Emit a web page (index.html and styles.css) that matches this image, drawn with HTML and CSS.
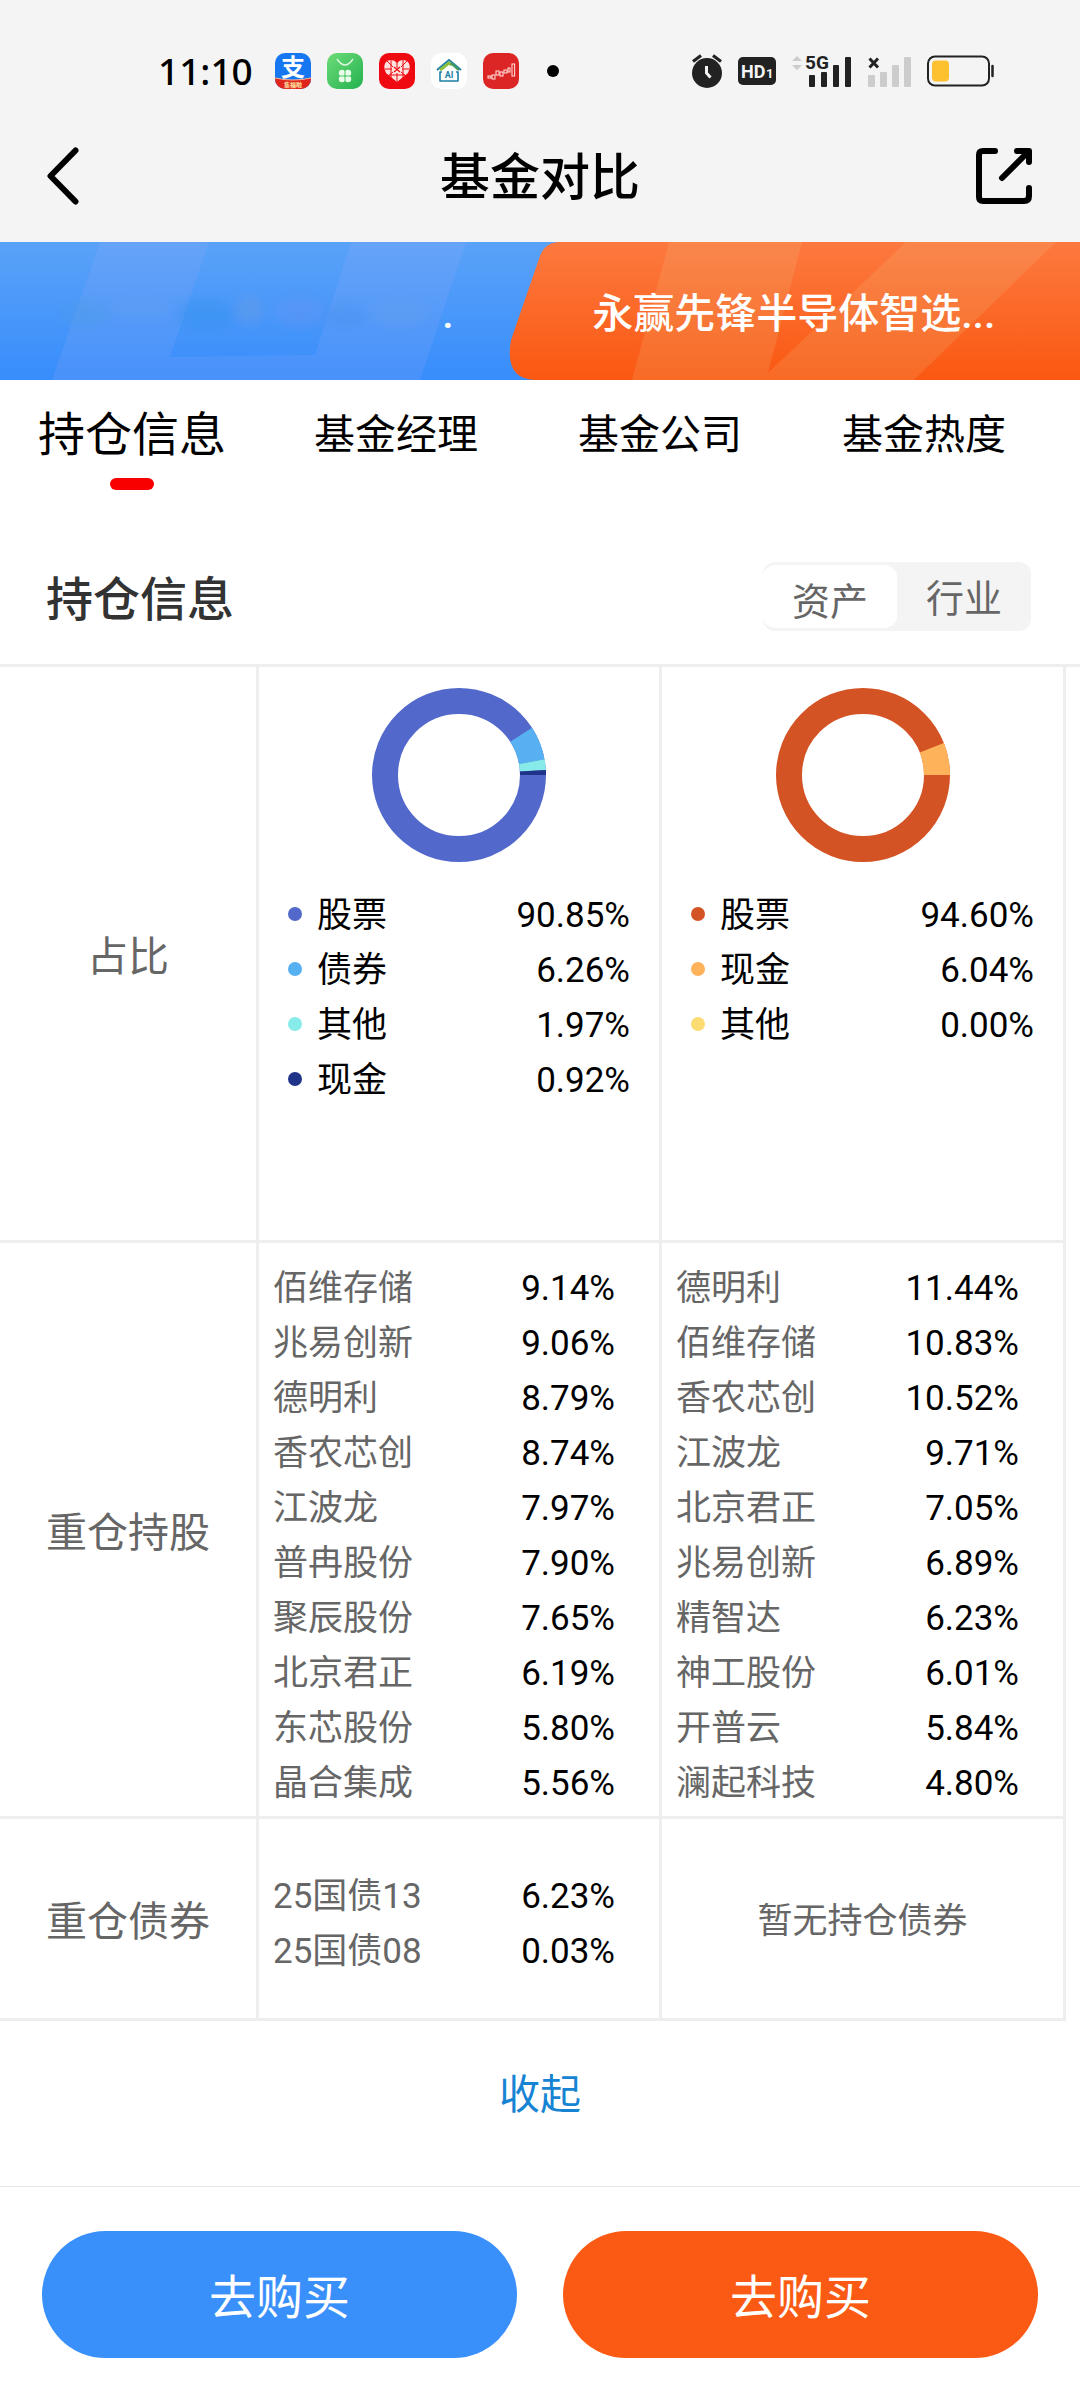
FILE: index.html
```html
<!DOCTYPE html>
<html lang="zh-CN">
<head>
  <meta charset="UTF-8">
  <meta name="viewport" content="width=device-width">
  <title>基金对比</title>
  <link rel="stylesheet" href="styles.css">
</head>
<body>
<div class="statusbar">
  <span class="time">11:10</span>
  <div class="apps">
    <svg width="36" height="36" viewBox="0 0 36 36">
      <defs><clipPath id="round"><rect width="36" height="36" rx="10"/></clipPath></defs>
      <g clip-path="url(#round)">
        <rect width="36" height="36" fill="#1677f0"/>
        <path d="M0 25 Q18 29 36 25 V36 H0z" fill="#e0261c"/>
        <path d="M0 25 Q18 29 36 25" fill="none" stroke="#f7b79a" stroke-width="1"/>
      </g>
      <text x="18" y="23" class="app-text" font-size="24" fill="#fff">支</text>
      <text x="18" y="34" class="app-text" font-size="6" fill="#ffe9a8">集福啦</text>
    </svg>
    <svg width="36" height="36" viewBox="0 0 36 36">
      <defs><linearGradient id="green" x2="1" y2="1"><stop stop-color="#6edc78"/><stop offset="1" stop-color="#22b14f"/></linearGradient></defs>
      <rect width="36" height="36" rx="10" fill="url(#green)"/>
      <path d="M10 6 Q18 18 26 6" fill="none" stroke="#d9f7dc" stroke-width="1.4"/>
      <g fill="#e9fbe9"><circle cx="15" cy="20" r="3.2"/><circle cx="21" cy="20" r="3.2"/><circle cx="15" cy="26" r="3.2"/><circle cx="21" cy="26" r="3.2"/></g>
      <path d="M18 17v12M12 23h12" stroke="#55cd6c" stroke-width="1"/>
    </svg>
    <svg width="36" height="36" viewBox="0 0 36 36">
      <rect width="36" height="36" rx="10" fill="#ee0a10"/>
      <path d="M18 29 L7 20 Q3 12 8 8 Q14 5 18 10 Q22 5 28 8 Q33 12 29 20z" fill="#ffe2de"/>
      <path d="M18 9v6M18 20v9M8 8l6 6M28 8l-6 6M14 19l-6 5M22 19l6 5M6 16h7M23 16h7M10 22h16M12 6v19M24 6v19" stroke="#ee0a10" stroke-width="1" fill="none"/>
      <path d="M15 14l6 5M21 14l-6 5" stroke="#ee0a10" stroke-width="1.2"/>
    </svg>
    <svg width="36" height="36" viewBox="0 0 36 36">
      <rect width="36" height="36" rx="10" fill="#fff"/>
      <path d="M6 17 L18 7 L30 17" fill="none" stroke="#1d7fa8" stroke-width="2"/>
      <path d="M9 17 L18 10 L21 12" fill="none" stroke="#8cbf3f" stroke-width="3"/>
      <path d="M20 10 L28 17" stroke="#3f9a62" stroke-width="2.4"/>
      <path d="M11 19H9V28H27V19H25" fill="none" stroke="#1d7fa8" stroke-width="1.6" stroke-linejoin="round"/>
      <text x="18" y="25" class="app-text" font-size="9" fill="#1d7fa8">AI</text>
    </svg>
    <svg width="36" height="36" viewBox="0 0 36 36">
      <rect width="36" height="36" rx="10" fill="#dc2626"/>
      <g fill="none" stroke="#ffd8d4" stroke-width="1.1">
        <rect x="5" y="23" width="3" height="2"/><rect x="9" y="22" width="3" height="4"/><rect x="13" y="18" width="3" height="4"/>
        <rect x="17" y="19" width="3" height="4"/><rect x="21" y="17" width="3" height="3"/><rect x="25" y="15" width="2" height="4"/><rect x="29" y="11" width="2.6" height="12"/>
      </g>
    </svg>
  </div>
  <i class="more-dot"></i>
  <div class="signals">
    <svg width="32" height="36" viewBox="0 0 32 36">
      <circle cx="16" cy="20" r="15" fill="#222"/>
      <path d="M2 8.500L10 2.500M30 8.500L22 2.500" stroke="#222" stroke-width="3.200"/>
      <path d="M15.500 13V20L19.500 24.500" fill="none" stroke="#f4f4f4" stroke-width="3"/>
    </svg>
    <svg width="38" height="28" viewBox="0 0 38 28">
      <rect width="38" height="28" rx="5" fill="#222"/>
      <text x="3" y="21" class="net-text" font-size="18" fill="#f4f4f4">HD</text>
      <text x="28" y="21" class="net-text" font-size="13" fill="#f4f4f4">1</text>
    </svg>
    <svg class="net" width="62" height="34" viewBox="0 0 62 34">
      <path d="M1 7L6 2L11 7zM1 11L6 16L11 11z" fill="#ccc"/>
      <g fill="#222">
        <text x="14" y="15" class="net-text" font-size="19">5G</text>
        <rect x="18" y="21" width="6" height="12" rx="1"/><rect x="30" y="18" width="6" height="15" rx="1"/>
        <rect x="42" y="11" width="6" height="22" rx="1"/><rect x="54" y="3" width="6" height="30" rx="1"/>
      </g>
    </svg>
    <svg width="44" height="34" viewBox="0 0 44 34">
      <g fill="#ccc">
        <rect x="0" y="21" width="7" height="12" rx="1"/><rect x="12" y="18" width="7" height="15" rx="1"/>
        <rect x="24" y="11" width="7" height="22" rx="1"/><rect x="36" y="3" width="7" height="30" rx="1"/>
      </g>
      <path d="M1.500 4.500L10 13.500M10 4.500L1.500 13.500" stroke="#222" stroke-width="3"/>
    </svg>
    <svg width="68" height="32" viewBox="0 0 68 32">
      <rect x="1" y="1.500" width="61" height="29" rx="7" fill="none" stroke="#222" stroke-width="2"/>
      <rect x="5" y="5.500" width="17" height="21" rx="4" fill="#fdc02f"/>
      <path d="M65.500 11V21" stroke="#222" stroke-width="2.500" stroke-linecap="round"/>
    </svg>
  </div>
</div>

<header class="header">
  <button class="icon-btn" aria-label="返回">
    <svg width="32" height="58" viewBox="0 0 32 58"><path d="M28.500 3.500L3.500 29L28.500 54.500" class="line"/></svg>
  </button>
  <h1 class="title">基金对比</h1>
  <button class="icon-btn" aria-label="分享">
    <svg width="58" height="58" viewBox="0 0 58 58">
      <path d="M20 4H8Q4 4 4 8V50Q4 54 8 54H49Q54 54 54 49V41M42 4H54V15M53 5L27 31" class="line"/>
    </svg>
  </button>
</header>

<div class="banner">
  <svg class="banner-bg" viewBox="0 0 1080 138" preserveAspectRatio="none">
    <defs>
      <linearGradient id="blue" x2="0" y2="1"><stop stop-color="#5aa2f8"/><stop offset="1" stop-color="#388dfc"/></linearGradient>
      <linearGradient id="orange" x2="0" y2="1"><stop stop-color="#fd793f"/><stop offset="1" stop-color="#fa5811"/></linearGradient>
      <filter id="soft"><feGaussianBlur stdDeviation="5"/></filter>
    </defs>
    <rect width="1080" height="138" fill="url(#blue)"/>
    <path d="M100 0H209L170 115L315 113L351 0H466L420 138H52z" fill="#a8b0fa" opacity=".15"/>
    <g filter="url(#soft)" opacity=".35">
      <ellipse cx="85" cy="72" rx="24" ry="14" fill="#4c9ce4"/><ellipse cx="140" cy="66" rx="28" ry="12" fill="#5fa0f0"/>
      <ellipse cx="205" cy="72" rx="30" ry="15" fill="#3392e8"/><ellipse cx="250" cy="68" rx="14" ry="15" fill="#6f9ce0"/>
      <ellipse cx="300" cy="70" rx="26" ry="15" fill="#6a94f2"/><ellipse cx="345" cy="74" rx="22" ry="12" fill="#4592e8"/>
      <ellipse cx="400" cy="72" rx="28" ry="15" fill="#64a0ec"/>
    </g>
    <path d="M1080 0H560Q545 0 540 14L511 98Q504 138 536 138H1080z" fill="url(#orange)"/>
    <path d="M669 0H802L768 131L906 0H1056L914 138H632z" fill="#f0c88c" opacity=".17"/>
  </svg>
  <div class="fund fund-a">.</div>
  <div class="fund fund-b">永赢先锋半导体智选...</div>
</div>

<nav class="tabs">
  <button class="tab active">持仓信息</button>
  <button class="tab">基金经理</button>
  <button class="tab">基金公司</button>
  <button class="tab">基金热度</button>
</nav>

<section>
  <div class="section-head">
    <h2>持仓信息</h2>
    <div class="switch">
      <button class="on">资产</button><button>行业</button>
    </div>
  </div>

  <table class="compare">
    <tr>
      <th>占比</th>
      <td class="ratio">
        <svg class="donut" width="174" height="174" viewBox="0 0 174 174">
          <circle cx="87" cy="87" r="74" pathLength="100" stroke="#5269cb"/>
          <circle cx="87" cy="87" r="74" pathLength="100" stroke="#57b0f1" stroke-dasharray="6.26 100" stroke-dashoffset="-90.85"/>
          <circle cx="87" cy="87" r="74" pathLength="100" stroke="#86ebe9" stroke-dasharray="1.97 100" stroke-dashoffset="-97.11"/>
          <circle cx="87" cy="87" r="74" pathLength="100" stroke="#1f3489" stroke-dasharray="0.92 100" stroke-dashoffset="-99.08"/>
        </svg>
        <ul class="list">
          <li><i class="dot c1"></i>股票<b>90.85%</b></li>
          <li><i class="dot c2"></i>债券<b>6.26%</b></li>
          <li><i class="dot c3"></i>其他<b>1.97%</b></li>
          <li><i class="dot c4"></i>现金<b>0.92%</b></li>
        </ul>
      </td>
      <td class="ratio">
        <svg class="donut" width="174" height="174" viewBox="0 0 174 174">
          <circle cx="87" cy="87" r="74" pathLength="100" stroke="#d45325"/>
          <circle cx="87" cy="87" r="74" pathLength="100" stroke="#feb35a" stroke-dasharray="6 100" stroke-dashoffset="-94"/>
        </svg>
        <ul class="list">
          <li><i class="dot c5"></i>股票<b>94.60%</b></li>
          <li><i class="dot c6"></i>现金<b>6.04%</b></li>
          <li><i class="dot c7"></i>其他<b>0.00%</b></li>
        </ul>
      </td>
    </tr>
    <tr>
      <th>重仓持股</th>
      <td class="stocks">
        <ul class="list">
          <li>佰维存储<b>9.14%</b></li>
          <li>兆易创新<b>9.06%</b></li>
          <li>德明利<b>8.79%</b></li>
          <li>香农芯创<b>8.74%</b></li>
          <li>江波龙<b>7.97%</b></li>
          <li>普冉股份<b>7.90%</b></li>
          <li>聚辰股份<b>7.65%</b></li>
          <li>北京君正<b>6.19%</b></li>
          <li>东芯股份<b>5.80%</b></li>
          <li>晶合集成<b>5.56%</b></li>
        </ul>
      </td>
      <td class="stocks">
        <ul class="list">
          <li>德明利<b>11.44%</b></li>
          <li>佰维存储<b>10.83%</b></li>
          <li>香农芯创<b>10.52%</b></li>
          <li>江波龙<b>9.71%</b></li>
          <li>北京君正<b>7.05%</b></li>
          <li>兆易创新<b>6.89%</b></li>
          <li>精智达<b>6.23%</b></li>
          <li>神工股份<b>6.01%</b></li>
          <li>开普云<b>5.84%</b></li>
          <li>澜起科技<b>4.80%</b></li>
        </ul>
      </td>
    </tr>
    <tr>
      <th>重仓债券</th>
      <td class="bonds">
        <ul class="list">
          <li>25国债13<b>6.23%</b></li>
          <li>25国债08<b>0.03%</b></li>
        </ul>
      </td>
      <td class="empty">暂无持仓债券</td>
    </tr>
  </table>

  <button class="fold">收起</button>
</section>

<footer class="footer">
  <button class="buy buy-a">去购买</button>
  <button class="buy buy-b">去购买</button>
</footer>
</body>
</html>
```
FILE: styles.css
```css
* {
  box-sizing: border-box;
}

body {
  margin: 0;
  background: #fff;
  color: #000;
  font-family: Roboto, "Noto Sans CJK SC", sans-serif;
  font-size: 35px;
  line-height: 55px;
}

button {
  margin: 0;
  padding: 0;
  border: 0;
  background: none;
  color: inherit;
  font: inherit;
}

svg {
  display: block;
}

/* 状态栏 */
.statusbar {
  display: flex;
  align-items: center;
  height: 110px;
  padding: 32px 85px 0 158px;
  background: #f4f4f4;
}

.time {
  padding-bottom: 2px;
  font-family: "Noto Sans", sans-serif;
  font-size: 37px;
  font-weight: 500;
}

.apps {
  display: flex;
  gap: 16px;
  margin-left: 22px;
}

.app-text {
  font-weight: 700;
  text-anchor: middle;
}

.net {
  overflow: visible;
}

.net-text {
  font-weight: 700;
}

.more-dot {
  width: 12px;
  height: 12px;
  margin-left: 28px;
  border-radius: 50%;
  background: #000;
}

.signals {
  display: flex;
  align-items: center;
  gap: 15px;
  margin-left: auto;
}

/* 标题栏 */
.header {
  display: flex;
  align-items: center;
  justify-content: space-between;
  height: 132px;
  padding: 0 47px;
  background: #f4f4f4;
}

.icon-btn {
  width: 60px;
}

.icon-btn:last-child svg {
  margin-left: auto;
}

.line {
  fill: none;
  stroke: #000;
  stroke-width: 6;
  stroke-linecap: round;
  stroke-linejoin: round;
}

.title {
  margin: 0;
  padding-top: 5px;
  font-size: 50px;
  font-weight: 500;
}

/* 基金名称 */
.banner {
  position: relative;
  display: flex;
  height: 138px;
}

.banner-bg {
  position: absolute;
  width: 100%;
  height: 100%;
}

.fund {
  position: relative;
  padding-top: 7px;
  color: #fff;
  font-size: 41px;
  font-weight: 500;
  line-height: 131px;
}

.fund-a {
  width: 47%;
  padding-right: 54px;
  text-align: right;
}

.fund-b {
  width: 53%;
  text-align: center;
}

/* 标签 */
.tabs {
  display: grid;
  grid-template-columns: repeat(4, 1fr);
  align-items: start;
  padding: 25px 24px 0 0;
}

.tab {
  font-size: 41px;
  line-height: 60px;
}

.tab.active {
  font-size: 47px;
}

.tab.active::after {
  content: "";
  display: block;
  width: 44px;
  height: 12px;
  margin: 13px auto 0;
  border-radius: 6px;
  background: #f80000;
}

.section-head {
  display: flex;
  align-items: flex-end;
  justify-content: space-between;
  padding: 72px 49px 33px 46px;
  border-bottom: 3px solid #eee;
}

.section-head h2 {
  margin: 0;
  color: #333;
  font-size: 47px;
  font-weight: 500;
  line-height: 62px;
}

.switch {
  display: flex;
  border-radius: 12px;
  background: #f4f4f4;
}

.switch button {
  padding: 13px 29px 8px;
  color: #666;
  font-size: 38px;
  line-height: 48px;
}

.switch .on {
  padding-bottom: 2px;
  border: solid #f4f4f4;
  border-width: 3px 0;
  border-radius: 14px;
  background: #fff;
}

/* 对比表 */
.compare {
  width: calc(100% - 14px);
  table-layout: fixed;
  border-collapse: separate;
  border-spacing: 0;
}

.compare th,
.compare td {
  padding: 0;
  border: solid #eee;
  border-width: 0 3px 3px 0;
}

.compare th {
  width: 259px;
  padding-top: 8px;
  color: #666;
  font-size: 41px;
  font-weight: 400;
}

.compare th + td {
  width: 403px;
}

.compare .ratio {
  padding: 21px 29px 132px;
  vertical-align: top;
}

.compare .stocks {
  padding: 18px 44px 5px 14px;
  color: #666;
}

.compare .bonds {
  padding: 50px 44px 39px 14px;
  color: #666;
}

.compare .empty {
  padding-top: 6px;
  color: #666;
  text-align: center;
}

.donut {
  margin: 0 auto 26px;
}

.donut circle {
  fill: none;
  stroke-width: 26;
}

.list {
  margin: 0;
  padding: 0;
  list-style: none;
}

.list li {
  display: flex;
  align-items: center;
}

.list b {
  margin-left: auto;
  color: #000;
  font-weight: 400;
}

.dot {
  width: 14px;
  height: 14px;
  margin: 0 15px 4px 0;
  border-radius: 50%;
}

.c1 { background: #5269cb; }
.c2 { background: #57b0f1; }
.c3 { background: #86ebe9; }
.c4 { background: #1f3489; }
.c5 { background: #d45325; }
.c6 { background: #feb35a; }
.c7 { background: #fcdc72; }

.fold {
  display: block;
  margin: 0 auto;
  padding: 44px 40px 61px;
  color: #1684d2;
  font-size: 41px;
  line-height: 60px;
}

/* 底部按钮 */
.footer {
  display: flex;
  gap: 46px;
  padding: 44px 42px 42px;
  border-top: 1px solid #e6e6e6;
}

.buy {
  flex: 1;
  height: 127px;
  padding-top: 6px;
  border-radius: 64px;
  color: #fff;
  font-size: 47px;
}

.buy-a {
  background: #3a90fb;
}

.buy-b {
  background: #fb5a14;
}
```
